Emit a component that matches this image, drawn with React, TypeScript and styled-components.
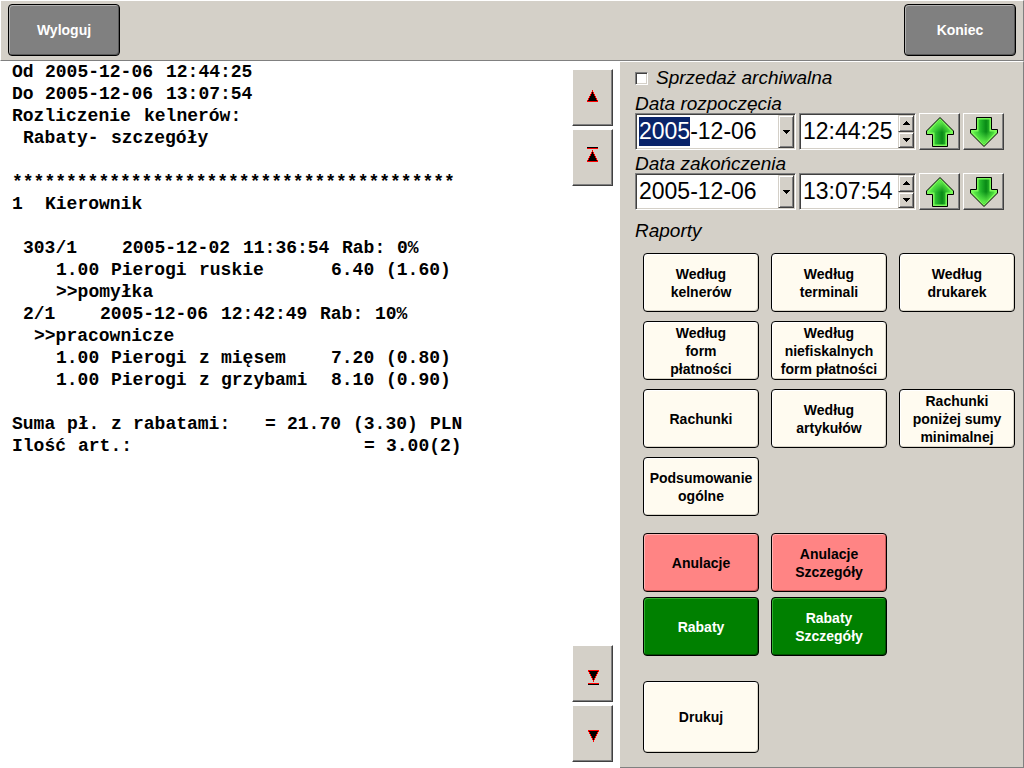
import React, { useEffect, useRef } from "react";
import styled, { createGlobalStyle, css } from "styled-components";

const FACE = "#d4d0c8";
const SHADOW = "#808080";
const DARK = "#404040";

const GlobalStyle = createGlobalStyle`
  *, *::before, *::after { box-sizing: border-box; }
  body {
    margin: 0;
    background: ${FACE};
    color: #000;
    font-family: "Liberation Sans", Arial, sans-serif;
  }
  button, input { font: inherit; color: inherit; margin: 0; }
`;

const Screen = styled.div`
  display: flex;
  flex-direction: column;
  min-height: 100vh;
`;

const TopBar = styled.header`
  display: flex;
  justify-content: space-between;
  padding: 3px 7px 4px;
  background: ${FACE};
  border: 1px solid ${SHADOW};
  border-top-color: #fff;
  border-left-color: #fff;
`;

const Body = styled.div`
  display: flex;
  flex: 1;
`;

const tones = {
  gray: { bg: "#808080", fg: "#fff", light: "#b0b0b0", dark: "#585858" },
  cream: { bg: "#fffbf0", fg: "#000", light: "#fff", dark: "#d8d4c8" },
  red: { bg: "#ff8484", fg: "#000", light: "#ffb4b4", dark: "#c85858" },
  green: { bg: "#008000", fg: "#fff", light: "#30b030", dark: "#005000" },
};

type Tone = keyof typeof tones;

const ActionButton = styled.button<{ $tone: Tone; $height?: number }>`
  width: 100%;
  height: ${(p) => p.$height ?? 59}px;
  padding: 0;
  border: 1px solid #000;
  border-radius: 4px;
  background: ${(p) => tones[p.$tone].bg};
  color: ${(p) => tones[p.$tone].fg};
  box-shadow:
    inset 1px 1px 0 ${(p) => tones[p.$tone].light},
    inset -1px -1px 0 ${(p) => tones[p.$tone].dark};
  font-size: 14px;
  font-weight: bold;
  line-height: 18px;
  text-align: center;
  white-space: pre-line;
`;

const TopSlot = styled.div`
  width: 112px;
`;

const ReportPane = styled.main`
  display: flex;
  flex: 1;
  justify-content: space-between;
  padding-right: 7px;
  background: #fff;
`;

const Receipt = styled.div`
  padding: 0 0 0 12px;
  font-family: "Liberation Mono", "Courier New", monospace;
  font-size: 18px;
  font-weight: bold;
  line-height: 22px;
`;

const ReceiptLine = styled.div`
  display: grid;
  grid-template-columns: repeat(41, 11px);
  min-height: 22px;
`;

const ReceiptCell = styled.span<{ $col: number }>`
  grid-row: 1;
  grid-column: ${(p) => p.$col + 1};
  white-space: pre;
`;

const ScrollColumn = styled.nav`
  display: flex;
  flex-direction: column;
  justify-content: space-between;
  padding: 8px 0 6px;
`;

const ScrollGroup = styled.div`
  display: flex;
  flex-direction: column;
  gap: 3px;
`;

const raised = css`
  padding: 0;
  background: ${FACE};
  border: 1px solid ${DARK};
  border-top-color: #fff;
  border-left-color: #fff;
  box-shadow: inset -1px -1px 0 ${SHADOW};
`;

const sunken = css`
  background: #fff;
  border: 1px solid #fff;
  border-top-color: ${SHADOW};
  border-left-color: ${SHADOW};
  box-shadow: inset 1px 1px 0 ${DARK}, inset -1px -1px 0 ${FACE};
`;

const ScrollButton = styled.button`
  ${raised}
  display: block;
  width: 41px;
  height: 57px;
  svg { display: block; margin: 1px; }
`;

const SidePanel = styled.aside`
  width: 404px;
  padding: 7px 8px 14px 15px;
  background: ${FACE};
  border: 1px solid ${SHADOW};
  border-top-color: #fff;
  border-left: 0;
`;

const labelText = css`
  font-size: 19px;
  font-style: italic;
  line-height: 18px;
`;

const ArchiveRow = styled.label`
  ${labelText}
  display: flex;
  align-items: center;
  gap: 8px;
  margin-bottom: 8px;
`;

const CheckBox = styled.input`
  ${sunken}
  appearance: none;
  width: 13px;
  height: 13px;
`;

const FieldLabel = styled.label`
  ${labelText}
  display: block;
`;

const SectionTitle = styled.h2`
  ${labelText}
  margin: 12px 0 13px;
  font-weight: normal;
`;

const DateRow = styled.div`
  display: flex;
  gap: 3px;
  margin-bottom: 5px;
`;

const Field = styled.div<{ $width: number }>`
  ${sunken}
  display: flex;
  width: ${(p) => p.$width}px;
  height: 37px;
  padding: 1px;
`;

const FieldInput = styled.input`
  flex: 1;
  min-width: 0;
  height: 29px;
  margin: 2px 0;
  padding: 0 0 0 2px;
  border: 0;
  outline: 0;
  background: transparent;
  caret-color: transparent;
  font-size: 23px;
  line-height: 29px;
  &::selection { background: #0a246a; color: #fff; }
`;

const SmallButton = styled.button`
  border: 1px solid ${DARK};
  border-top-color: ${FACE};
  border-left-color: ${FACE};
  box-shadow: inset 1px 1px 0 #fff, inset -1px -1px 0 ${SHADOW};
  background: ${FACE};
  padding: 0;
  display: flex;
  flex: 1;
  align-items: center;
  justify-content: center;
  width: 16px;
`;

const FieldSide = styled.div`
  display: flex;
  flex-direction: column;
  width: 16px;
`;

const ArrowButton = styled.button`
  ${raised}
  display: flex;
  align-items: center;
  justify-content: center;
  width: 41px;
  height: 37px;
`;

const ButtonGrid = styled.div<{ $gap: number }>`
  display: grid;
  grid-template-columns: repeat(3, 116px);
  gap: ${(p) => p.$gap}px 12px;
  margin-left: 8px;
  & + & { margin-top: 17px; }
`;

const PrintSlot = styled.div`
  width: 116px;
  margin: 25px 0 0 8px;
`;

type Cell = [number, string];

const receipt: Cell[][] = [
  [[0, "Od"], [3, "2005-12-06"], [14, "12:44:25"]],
  [[0, "Do"], [3, "2005-12-06"], [14, "13:07:54"]],
  [[0, "Rozliczenie"], [12, "kelnerów:"]],
  [[1, "Rabaty-"], [9, "szczegóły"]],
  [],
  [[0, "*".repeat(41)]],
  [[0, "1"], [3, "Kierownik"]],
  [],
  [[1, "303/1"], [10, "2005-12-02"], [21, "11:36:54"], [30, "Rab:"], [35, "0%"]],
  [[4, "1.00"], [9, "Pierogi"], [17, "ruskie"], [29, "6.40"], [34, "(1.60)"]],
  [[4, ">>pomyłka"]],
  [[1, "2/1"], [8, "2005-12-06"], [19, "12:42:49"], [28, "Rab:"], [33, "10%"]],
  [[2, ">>pracownicze"]],
  [[4, "1.00"], [9, "Pierogi"], [17, "z"], [19, "mięsem"], [29, "7.20"], [34, "(0.80)"]],
  [[4, "1.00"], [9, "Pierogi"], [17, "z"], [19, "grzybami"], [29, "8.10"], [34, "(0.90)"]],
  [],
  [[0, "Suma"], [5, "pł."], [9, "z"], [11, "rabatami:"], [23, "="], [25, "21.70"], [31, "(3.30)"], [38, "PLN"]],
  [[0, "Ilość"], [6, "art.:"], [32, "="], [34, "3.00(2)"]],
];

const reports = [
  "Według\nkelnerów",
  "Według\nterminali",
  "Według\ndrukarek",
  "Według\nform\npłatności",
  "Według\nniefiskalnych\nform płatności",
  null,
  "Rachunki",
  "Według\nartykułów",
  "Rachunki\nponiżej sumy\nminimalnej",
  "Podsumowanie\nogólne",
];

const ScrollUpIcon = ({ toTop = false }: { toTop?: boolean }) => (
  <svg width="37" height="53" viewBox="0 0 37 53" shapeRendering="crispEdges" aria-hidden="true">
    {toTop && <path d="M13 16h11v1h-11z" fill="#000" />}
    {toTop && <path d="M13 17h11v1h-11z" fill="#f00" />}
    <path d="M18 19h1v2h1v2h1v2h1v2h1v2h1v2h-11v-2h1v-2h1v-2h1v-2h1v-2h1z" fill="#f00" />
    <path d="M18 21h1v2h1v2h1v2h1v2h1v1h-9v-1h1v-2h1v-2h1v-2h1z" fill="#000" />
  </svg>
);

const ScrollDownIcon = ({ toEnd = false }: { toEnd?: boolean }) => (
  <svg width="37" height="53" viewBox="0 0 37 53" shapeRendering="crispEdges" aria-hidden="true">
    <path d="M14 23h11v2h-1v2h-1v2h-1v2h-1v2h-1v2h-1v-2h-1v-2h-1v-2h-1v-2h-1v-2h-1z" fill="#f00" />
    <path d="M15 24h9v1h-1v2h-1v2h-1v2h-1v2h-1v-2h-1v-2h-1v-2h-1v-2h-1z" fill="#000" />
    {toEnd && <path d="M14 36h11v1h-11z" fill="#f00" />}
    {toEnd && <path d="M14 37h11v1h-11z" fill="#000" />}
  </svg>
);

const TinyArrow = ({ up = false }: { up?: boolean }) => (
  <svg width="7" height="4" viewBox="0 0 7 4" shapeRendering="crispEdges" aria-hidden="true">
    <path d={up ? "M3 0h1v1h1v1h1v1h1v1h-7v-1h1v-1h1v-1h1z" : "M0 0h7v1h-1v1h-1v1h-1v1h-1v-1h-1v-1h-1v-1h-1z"} />
  </svg>
);

const GreenArrow = ({ down = false }: { down?: boolean }) => {
  const id = down ? "arrow-down" : "arrow-up";
  return (
    <svg width="31" height="33" viewBox="0 0 31 33" aria-hidden="true">
      <defs>
        <linearGradient id={id} x1="0" y1="0" x2="1" y2="0">
          <stop offset="0" stopColor="#62f04a" />
          <stop offset="0.35" stopColor="#22b42a" />
          <stop offset="0.6" stopColor="#088a16" />
          <stop offset="1" stopColor="#50e83e" />
        </linearGradient>
        <linearGradient id={`${id}-tip`} x1="0" y1="0" x2="0" y2="1">
          <stop offset="0" stopColor="#6cf850" />
          <stop offset="0.5" stopColor="#6cf850" stopOpacity="0" />
        </linearGradient>
      </defs>
      <g transform={down ? "matrix(1 0 0 -1 0 34)" : undefined}>
        <path d="M16 2.500L29.500 16V19.500H23.500V31.500H8.500V19.500H2.500V16Z" fill="#78f858" stroke="#000" />
        <path d="M16 5L26.500 16V17.500H21.500V29.500H10.500V17.500H5.500V16Z" fill={`url(#${id})`} />
        <path d="M16 5L26.500 16V17.500H21.500V29.500H10.500V17.500H5.500V16Z" fill={`url(#${id}-tip)`} />
      </g>
    </svg>
  );
};

interface DateFieldsProps {
  id: string;
  label: string;
  date: string;
  time: string;
  activeYear?: boolean;
}

const DateFields = ({ id, label, date, time, activeYear = false }: DateFieldsProps) => {
  const input = useRef<HTMLInputElement>(null);

  useEffect(() => {
    if (activeYear && input.current) {
      input.current.focus();
      input.current.setSelectionRange(0, 4);
    }
  }, [activeYear]);

  return (
    <>
      <FieldLabel htmlFor={id}>{label}</FieldLabel>
      <DateRow>
        <Field $width={161}>
          <FieldInput id={id} ref={input} defaultValue={date} />
          <FieldSide>
            <SmallButton type="button" aria-label="Kalendarz"><TinyArrow /></SmallButton>
          </FieldSide>
        </Field>
        <Field $width={117}>
          <FieldInput aria-label={`${label} - godzina`} defaultValue={time} />
          <FieldSide>
            <SmallButton type="button" aria-label="Później"><TinyArrow up /></SmallButton>
            <SmallButton type="button" aria-label="Wcześniej"><TinyArrow /></SmallButton>
          </FieldSide>
        </Field>
        <ArrowButton type="button" aria-label="Następny dzień"><GreenArrow /></ArrowButton>
        <ArrowButton type="button" aria-label="Poprzedni dzień"><GreenArrow down /></ArrowButton>
      </DateRow>
    </>
  );
};

export default function App() {
  return (
    <Screen>
      <GlobalStyle />
      <TopBar>
        <TopSlot><ActionButton type="button" $tone="gray" $height={52}>Wyloguj</ActionButton></TopSlot>
        <TopSlot><ActionButton type="button" $tone="gray" $height={52}>Koniec</ActionButton></TopSlot>
      </TopBar>
      <Body>
        <ReportPane>
          <Receipt>
            {receipt.map((cells, row) => (
              <ReceiptLine key={row}>
                {cells.map(([col, text]) => (
                  <ReceiptCell key={col} $col={col}>{text}</ReceiptCell>
                ))}
              </ReceiptLine>
            ))}
          </Receipt>
          <ScrollColumn aria-label="Przewijanie">
            <ScrollGroup>
              <ScrollButton type="button" aria-label="W górę"><ScrollUpIcon /></ScrollButton>
              <ScrollButton type="button" aria-label="Na początek"><ScrollUpIcon toTop /></ScrollButton>
            </ScrollGroup>
            <ScrollGroup>
              <ScrollButton type="button" aria-label="Na koniec"><ScrollDownIcon toEnd /></ScrollButton>
              <ScrollButton type="button" aria-label="W dół"><ScrollDownIcon /></ScrollButton>
            </ScrollGroup>
          </ScrollColumn>
        </ReportPane>
        <SidePanel>
          <ArchiveRow>
            <CheckBox type="checkbox" />
            Sprzedaż archiwalna
          </ArchiveRow>
          <DateFields id="start" label="Data rozpoczęcia" date="2005-12-06" time="12:44:25" activeYear />
          <DateFields id="end" label="Data zakończenia" date="2005-12-06" time="13:07:54" />
          <SectionTitle>Raporty</SectionTitle>
          <ButtonGrid $gap={9}>
            {reports.map((name, i) =>
              name ? <ActionButton key={i} type="button" $tone="cream">{name}</ActionButton> : <span key={i} />
            )}
          </ButtonGrid>
          <ButtonGrid $gap={5}>
            <ActionButton type="button" $tone="red">Anulacje</ActionButton>
            <ActionButton type="button" $tone="red">{"Anulacje\nSzczegóły"}</ActionButton>
            <span />
            <ActionButton type="button" $tone="green">Rabaty</ActionButton>
            <ActionButton type="button" $tone="green">{"Rabaty\nSzczegóły"}</ActionButton>
          </ButtonGrid>
          <PrintSlot>
            <ActionButton type="button" $tone="cream" $height={72}>Drukuj</ActionButton>
          </PrintSlot>
        </SidePanel>
      </Body>
    </Screen>
  );
}
